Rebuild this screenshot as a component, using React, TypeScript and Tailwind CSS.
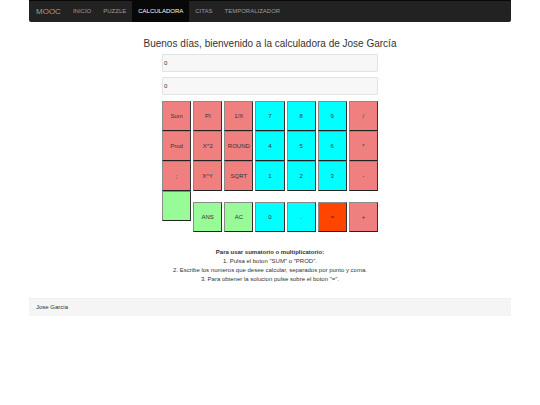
import { useState } from "react";

type Tone = "coral" | "cyan" | "green" | "orange";

const tones: Record<Tone, string> = {
  coral: "bg-[#f08080]",
  cyan: "bg-[#00ffff]",
  green: "bg-[#98fb98]",
  orange: "bg-[#ff4500]",
};

const keys: [string, Tone][] = [
  ["Sum", "coral"], ["PI", "coral"], ["1/X", "coral"], ["7", "cyan"], ["8", "cyan"], ["9", "cyan"], ["/", "coral"],
  ["Prod", "coral"], ["X^2", "coral"], ["ROUND", "coral"], ["4", "cyan"], ["5", "cyan"], ["6", "cyan"], ["*", "coral"],
  [";", "coral"], ["X^Y", "coral"], ["SQRT", "coral"], ["1", "cyan"], ["2", "cyan"], ["3", "cyan"], ["-", "coral"],
  ["", "green"], ["ANS", "green"], ["AC", "green"], ["0", "cyan"], [".", "cyan"], ["=", "orange"], ["+", "coral"],
];

const links = ["INICIO", "PUZZLE", "CALCULADORA", "CITAS", "TEMPORALIZADOR"];

function Key({ label, tone }: { label: string; tone: Tone }) {
  return (
    <button
      type="button"
      aria-label={label || "Vacío"}
      className={`flex h-[30px] items-center justify-center border border-t-[#8a8a8a] border-l-[#8a8a8a] border-r-[#333333] border-b-[#222222] text-[#333333] ${tones[tone]} ${label ? "self-end" : "self-start"}`}
    >
      {label}
    </button>
  );
}

function Display({ label }: { label: string }) {
  const [value, setValue] = useState("0");
  return (
    <input
      aria-label={label}
      value={value}
      onChange={(e) => setValue(e.target.value)}
      className="h-[18px] w-full rounded-[1px] border border-[#e3e3e3] bg-[#f7f7f7] px-px text-[#333333]"
    />
  );
}

export default function App() {
  return (
    <div className="bg-white px-[29px] font-['Liberation_Sans',Arial,sans-serif] text-[6px] leading-[9px] text-[#333333]">
      <nav className="flex h-[22px] items-stretch rounded-b-[2px] border-t border-[#080808] bg-[#222222] text-[#9d9d9d]">
        <a href="#" className="flex items-center pr-[6px] pl-[7px] text-[8px]">MOOC</a>
        {links.map((link) => (
          <a
            key={link}
            href="#"
            className={`flex items-center px-[6px] ${link === "CALCULADORA" ? "bg-[#080808] text-white" : ""}`}
          >
            {link}
          </a>
        ))}
      </nav>

      <main className="flex flex-col items-center pt-4">
        <h1 className="text-[10px] leading-3">Buenos días, bienvenido a la calculadora de Jose García</h1>
        <div className="mt-1 flex w-[216px] flex-col gap-[5px]">
          <Display label="Operación" />
          <Display label="Resultado" />
          <div className="grid grid-cols-7 grid-rows-[30px_30px_30px_41px] gap-x-[2px] pt-px">
            {keys.map(([label, tone], i) => (
              <Key key={i} label={label} tone={tone} />
            ))}
          </div>
        </div>
        <section className="mt-4 text-center">
          <h2 className="font-bold">Para usar sumatorio o multiplicatorio:</h2>
          <p>1. Pulsa el boton "SUM" o "PROD".</p>
          <p>2. Escribe los numeros que desee calcular, separados por punto y coma.</p>
          <p>3. Para obtener la solucion pulse sobre el boton "=".</p>
        </section>
      </main>

      <footer className="mt-[14px] border-t border-[#eeeeee] bg-[#f5f5f5] px-[7px] py-1">Jose Garcia</footer>
    </div>
  );
}
